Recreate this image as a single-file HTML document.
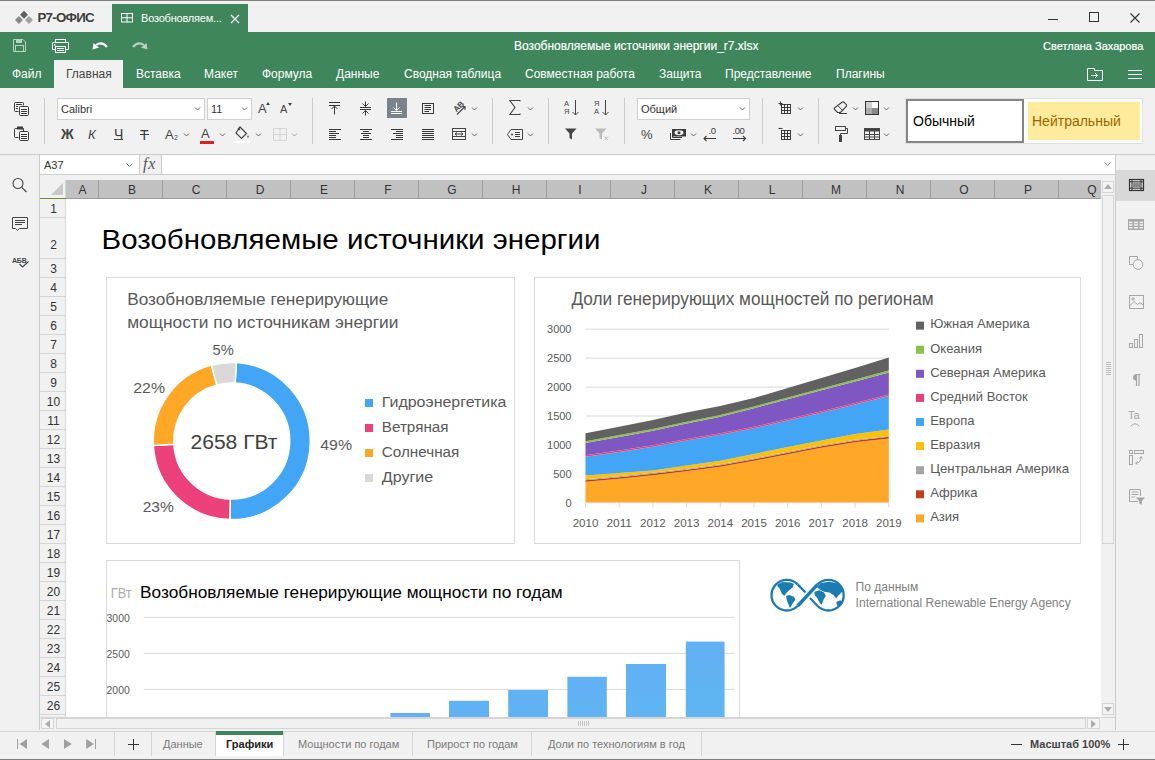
<!DOCTYPE html>
<html><head><meta charset="utf-8">
<style>
*{margin:0;padding:0;box-sizing:border-box}
html,body{width:1155px;height:760px;overflow:hidden;background:#f1f1f1;font-family:"Liberation Sans",sans-serif;position:relative}
.a{position:absolute}
.t{position:absolute;white-space:nowrap;line-height:1}
svg{position:absolute;overflow:visible}
</style></head><body>
<!-- ===== TITLE BAR ===== -->
<div class="a" style="left:0;top:0;width:1155px;height:1px;background:#808080"></div>
<svg style="left:14px;top:10px" width="20" height="15" viewBox="0 0 20 15"><path d="M10 0.75L13.95 4.7L10 8.65L6.05 4.7Z" fill="#5f5f5f"/><path d="M4.9 6.05L8.850000000000001 10L4.9 13.95L0.9500000000000002 10Z" fill="#8a8a8a"/><path d="M15 6.05L18.95 10L15 13.95L11.05 10Z" fill="#a3a3a3"/></svg>
<div class="t" style="left:37.5px;top:11px;font-size:13.3px;font-weight:bold;color:#3d3d3d;letter-spacing:-0.75px">Р7-ОФИС</div>
<div class="a" style="left:112px;top:4px;width:136px;height:28px;background:#40865c"></div>
<svg style="left:121px;top:13px" width="13" height="10" viewBox="0 0 13 10"><rect x="0.5" y="0.5" width="11" height="8.5" fill="none" stroke="#fff" stroke-width="1"/><path d="M6 0.5V9M0.5 4.75H11.5" stroke="#fff" stroke-width="1"/></svg>
<div class="t" style="left:141px;top:13px;font-size:11px;color:#fff;letter-spacing:-0.2px">Возобновляем...</div>
<svg style="left:230px;top:14px" width="10" height="10" viewBox="0 0 10 10"><path d="M1 1L9 9M9 1L1 9" stroke="#fff" stroke-width="1.2"/></svg>
<!-- window controls -->
<div class="a" style="left:1048px;top:19px;width:10px;height:1px;background:#333"></div>
<div class="a" style="left:1089px;top:12px;width:10px;height:10px;border:1px solid #333"></div>
<svg style="left:1130px;top:13px" width="10" height="10" viewBox="0 0 10 10"><path d="M0.5 0.5L9.5 9.5M9.5 0.5L0.5 9.5" stroke="#333" stroke-width="1.1"/></svg>

<!-- ===== GREEN HEADER ===== -->
<div class="a" style="left:0;top:32px;width:1155px;height:56px;background:#40865c"></div>
<!-- save (disabled) -->
<svg style="left:13px;top:39px" width="13" height="13" viewBox="0 0 13 13"><path d="M0.5 0.5H10L12.5 3V12.5H0.5Z" fill="none" stroke="#b9d2c2" stroke-width="1"/><rect x="3" y="0.5" width="6" height="3.5" fill="#b9d2c2"/><rect x="2.5" y="6.5" width="8" height="6" fill="none" stroke="#b9d2c2"/></svg>
<!-- print -->
<svg style="left:52px;top:39px" width="17" height="14" viewBox="0 0 17 14"><rect x="3.5" y="0.5" width="10" height="3" fill="none" stroke="#fff"/><path d="M3.5 10.5H0.5V3.5H16.5V10.5H13.5" fill="none" stroke="#fff"/><rect x="3.5" y="7.5" width="10" height="6" fill="none" stroke="#fff"/><path d="M5 9.5H12M5 11.5H12" stroke="#fff"/><rect x="2" y="5" width="1.5" height="1.5" fill="#fff"/></svg>
<!-- undo -->
<svg style="left:92px;top:42px" width="16" height="9" viewBox="0 0 16 9"><path d="M4 3 Q10 -1 15 5" fill="none" stroke="#fff" stroke-width="2"/><path d="M0.5 7.5 L1.5 1 L7 5.5Z" fill="#fff"/></svg>
<!-- redo disabled -->
<svg style="left:132px;top:42px" width="16" height="9" viewBox="0 0 16 9"><path d="M12 3 Q6 -1 1 5" fill="none" stroke="#b9d2c2" stroke-width="2"/><path d="M15.5 7.5 L14.5 1 L9 5.5Z" fill="#b9d2c2"/></svg>
<div class="t" style="left:514px;top:40px;font-size:12px;color:#fff;-webkit-text-stroke:0.15px #fff">Возобновляемые источники энергии_r7.xlsx</div>
<div class="t" style="left:1043px;top:40.7px;font-size:11px;color:#fff;-webkit-text-stroke:0.2px #fff">Светлана Захарова</div>

<!-- menu -->
<div class="a" style="left:54px;top:60px;width:69px;height:28px;background:#f1f1f1"></div>
<div class="t" style="left:12px;top:68px;font-size:12px;color:#fff">Файл</div>
<div class="t" style="left:66px;top:68px;font-size:12px;color:#444">Главная</div>
<div class="t" style="left:136px;top:68px;font-size:12px;color:#fff">Вставка</div>
<div class="t" style="left:204px;top:68px;font-size:12px;color:#fff">Макет</div>
<div class="t" style="left:262px;top:68px;font-size:12px;color:#fff">Формула</div>
<div class="t" style="left:336px;top:68px;font-size:12px;color:#fff">Данные</div>
<div class="t" style="left:404px;top:68px;font-size:12px;color:#fff">Сводная таблица</div>
<div class="t" style="left:525px;top:68px;font-size:12px;color:#fff">Совместная работа</div>
<div class="t" style="left:659px;top:68px;font-size:12px;color:#fff">Защита</div>
<div class="t" style="left:725px;top:68px;font-size:12px;color:#fff">Представление</div>
<div class="t" style="left:836px;top:68px;font-size:12px;color:#fff">Плагины</div>
<!-- open file location icon -->
<svg style="left:1087px;top:68px" width="16" height="13" viewBox="0 0 16 13"><path d="M0.5 0.5H7.5V2.5H15.5V12.5H0.5Z" fill="none" stroke="#fff"/><path d="M4 7.5H10.5M8 5L10.5 7.5L8 10" fill="none" stroke="#fff"/></svg>
<!-- hamburger -->
<div class="a" style="left:1128px;top:70px;width:14px;height:1px;background:#fff"></div>
<div class="a" style="left:1128px;top:74px;width:14px;height:1px;background:#fff"></div>
<div class="a" style="left:1128px;top:78px;width:14px;height:1px;background:#fff"></div>
<!-- ===== TOOLBAR ===== -->
<div class="a" style="left:0;top:154px;width:1155px;height:1px;background:#cbcbcb"></div>
<!-- copy/paste -->
<svg style="left:14px;top:102px" width="16" height="14" viewBox="0 0 16 14"><path d="M4.5 9.5H1.5Q0.5 9.5 0.5 8.5V1.5Q0.5 0.5 1.5 0.5H8.5Q9.5 0.5 9.5 1.5V3.5" fill="none" stroke="#3a3a3a"/><path d="M2 2.5H8M2 4.5H4M2 6.5H4" stroke="#3a3a3a"/><rect x="5.5" y="4.5" width="9" height="9" rx="1" fill="none" stroke="#3a3a3a"/><path d="M7 7.5H13M7 9.5H13M7 11.5H13" stroke="#3a3a3a"/></svg>
<svg style="left:14px;top:126px" width="16" height="15" viewBox="0 0 16 15"><path d="M4.5 11.5H1.5Q0.5 11.5 0.5 10.5V3.5Q0.5 2.5 1.5 2.5H9.5V5" fill="none" stroke="#3a3a3a"/><rect x="3" y="0.5" width="6" height="3" fill="#3a3a3a"/><rect x="5.5" y="5.5" width="9" height="9" rx="1" fill="none" stroke="#3a3a3a"/><path d="M7 8.5H13M7 10.5H13M7 12.5H13" stroke="#3a3a3a"/></svg>
<div class="a" style="left:44px;top:98px;width:1px;height:46px;background:#cbcbcb"></div>
<!-- font combo -->
<div class="a" style="left:57px;top:98px;width:148px;height:22px;background:#fff;border:1px solid #cfcfcf"></div>
<div class="t" style="left:61px;top:104px;font-size:11px;color:#333">Calibri</div>
<svg style="left:194px;top:107px" width="7" height="5" viewBox="0 0 7 5"><path d="M1 0.5L3.5 3L6 0.5" fill="none" stroke="#555" stroke-width="0.9"/></svg>
<div class="a" style="left:207px;top:98px;width:45px;height:22px;background:#fff;border:1px solid #cfcfcf"></div>
<div class="t" style="left:211px;top:104px;font-size:11px;color:#333">11</div>
<svg style="left:241px;top:107px" width="7" height="5" viewBox="0 0 7 5"><path d="M1 0.5L3.5 3L6 0.5" fill="none" stroke="#555" stroke-width="0.9"/></svg>
<div class="t" style="left:258px;top:102px;font-size:13px;color:#444">A</div>
<svg style="left:266px;top:102px" width="4" height="3" viewBox="0 0 4 3"><path d="M0 3L2 0L4 3Z" fill="#444"/></svg>
<div class="t" style="left:280px;top:104px;font-size:11px;color:#444">A</div>
<svg style="left:288px;top:103px" width="4" height="3" viewBox="0 0 4 3"><path d="M0 0L2 3L4 0Z" fill="#444"/></svg>
<!-- row 2: B I U S -->
<div class="t" style="left:61px;top:127px;font-size:14px;font-weight:bold;color:#444">Ж</div>
<div class="t" style="left:88px;top:128px;font-size:13px;font-style:italic;color:#444">К</div>
<div class="t" style="left:114px;top:126.5px;font-size:14px;color:#3a3a3a">Ч</div>
<div class="a" style="left:114px;top:139px;width:9px;height:1px;background:#444"></div>
<div class="t" style="left:140px;top:127.5px;font-size:14px;color:#3a3a3a">Т</div>
<div class="a" style="left:140px;top:134px;width:9px;height:1px;background:#3a3a3a"></div>
<div class="t" style="left:165px;top:128px;font-size:13px;color:#444">A</div>
<div class="t" style="left:174px;top:134px;font-size:7px;color:#444">2</div>
<svg style="left:183px;top:133px" width="7" height="5" viewBox="0 0 7 5"><path d="M1 0.5L3.5 3L6 0.5" fill="none" stroke="#555" stroke-width="0.9"/></svg>
<div class="t" style="left:201px;top:127px;font-size:13px;color:#444">A</div>
<div class="a" style="left:200px;top:141px;width:14px;height:3px;background:#e02020"></div>
<svg style="left:219px;top:133px" width="7" height="5" viewBox="0 0 7 5"><path d="M1 0.5L3.5 3L6 0.5" fill="none" stroke="#555" stroke-width="0.9"/></svg>
<svg style="left:235px;top:126px" width="16" height="17" viewBox="0 0 16 17"><path d="M5 1L11.5 7.5L6.5 12.5L1 7Z" fill="none" stroke="#444" stroke-width="1.2"/><path d="M3 2L5 4" stroke="#444" stroke-width="1.2"/><path d="M13 9Q11.5 11 13 12Q14.5 11 13 9Z" fill="#444"/><rect x="0" y="15" width="15" height="2" fill="#fff"/></svg>
<svg style="left:255px;top:133px" width="7" height="5" viewBox="0 0 7 5"><path d="M1 0.5L3.5 3L6 0.5" fill="none" stroke="#555" stroke-width="0.9"/></svg>
<svg style="left:273px;top:128px" width="14" height="13" viewBox="0 0 14 13"><rect x="0.5" y="0.5" width="13" height="12" fill="none" stroke="#bbb" stroke-dasharray="1 1"/><path d="M7 0.5V12.5M0.5 6.5H13.5" stroke="#bbb" stroke-dasharray="1 1"/></svg>
<svg style="left:291px;top:133px" width="7" height="5" viewBox="0 0 7 5"><path d="M1 0.5L3.5 3L6 0.5" fill="none" stroke="#999" stroke-width="0.9"/></svg>
<div class="a" style="left:312px;top:98px;width:1px;height:46px;background:#cbcbcb"></div>

<!-- alignment -->
<svg style="left:0;top:0" width="1" height="1" viewBox="0 0 1 1">
<path d="M329 102.5H340M329 105.5H340M334.5 106V114.5M331.5 109L334.5 106L337.5 109" fill="none" stroke="#383838"/>
<path d="M360 107.5H371M360 109.5H371M365.5 101.5V106.5M362.5 103.5L365.5 106.5L368.5 103.5M365.5 110.5V115.5M362.5 113.5L365.5 110.5L368.5 113.5" fill="none" stroke="#383838"/>
<rect x="387" y="98" width="20" height="20" fill="#7a828b"/>
<path d="M391 111.5H402M391 113.5H402M396.5 102.5V110.5M393.5 107.5L396.5 110.5L399.5 107.5" fill="none" stroke="#fff"/>
<rect x="422.5" y="103.5" width="11" height="10" fill="none" stroke="#383838"/>
<path d="M424.5 105.5H431M424.5 107.5H431M424.5 109.5H431M424.5 111.5H429" fill="none" stroke="#383838"/>
<path d="M329 129.5H341M329 131.5H336M329 133.5H339M329 135.5H336M329 137.5H336M329 139.5H341M360 129.5H372M363 131.5H369M361 133.5H371M363 135.5H369M363 137.5H369M360 139.5H372M391 129.5H403M396 131.5H403M393 133.5H403M396 135.5H403M396 137.5H403M391 139.5H403M422 129.5H434M422 131.5H434M422 133.5H434M422 135.5H434M422 137.5H434M422 139.5H434" fill="none" stroke="#383838"/>
</svg>
<svg style="left:452px;top:100px" width="16" height="16" viewBox="0 0 16 16"><text x="0" y="0" font-size="8" font-weight="bold" fill="#444" transform="translate(4.5 12.5) rotate(-45)" font-family="Liberation Sans">AB</text><path d="M5 14.5L12.5 7M9.5 6.5H13V10" fill="none" stroke="#444" stroke-width="1.1"/></svg>
<svg style="left:471px;top:107px" width="7" height="5" viewBox="0 0 7 5"><path d="M1 0.5L3.5 3L6 0.5" fill="none" stroke="#555" stroke-width="0.9"/></svg>
<svg style="left:452px;top:128px" width="14" height="12" viewBox="0 0 14 12"><rect x="0.5" y="0.5" width="13" height="11" fill="none" stroke="#444"/><path d="M0.5 3.5H13.5M0.5 8.5H13.5M3 6H11M5 4.5L3 6L5 7.5M9 4.5L11 6L9 7.5" fill="none" stroke="#444"/></svg>
<svg style="left:471px;top:133px" width="7" height="5" viewBox="0 0 7 5"><path d="M1 0.5L3.5 3L6 0.5" fill="none" stroke="#555" stroke-width="0.9"/></svg>
<div class="a" style="left:492px;top:98px;width:1px;height:46px;background:#cbcbcb"></div>

<!-- sum / named -->
<svg style="left:509px;top:100px" width="12" height="15" viewBox="0 0 12 15"><path d="M11 1.5V0.5H0.8L6 7.5L0.8 14.5H11V13.5" fill="none" stroke="#444" stroke-width="1.1"/></svg>
<svg style="left:527px;top:107px" width="7" height="5" viewBox="0 0 7 5"><path d="M1 0.5L3.5 3L6 0.5" fill="none" stroke="#555" stroke-width="0.9"/></svg>
<svg style="left:507px;top:129px" width="16" height="11" viewBox="0 0 16 11"><path d="M4 0.5H15.5V10.5H4L0.5 5.5Z" fill="none" stroke="#444"/><circle cx="5" cy="5.5" r="1" fill="#444"/><path d="M8 3.5H13M8 5.5H13M8 7.5H13" stroke="#444"/></svg>
<svg style="left:527px;top:133px" width="7" height="5" viewBox="0 0 7 5"><path d="M1 0.5L3.5 3L6 0.5" fill="none" stroke="#555" stroke-width="0.9"/></svg>
<div class="a" style="left:548px;top:98px;width:1px;height:46px;background:#cbcbcb"></div>

<!-- sort/filter -->
<div class="t" style="left:564px;top:100px;font-size:7.5px;color:#444;line-height:8px">А<br>Я</div>
<svg style="left:572px;top:100px" width="7" height="16" viewBox="0 0 7 16"><path d="M3.5 0V15M0.5 12L3.5 15L6.5 12" fill="none" stroke="#444"/></svg>
<div class="t" style="left:594px;top:100px;font-size:7.5px;color:#444;line-height:8px">Я<br>А</div>
<svg style="left:602px;top:100px" width="7" height="16" viewBox="0 0 7 16"><path d="M3.5 0V15M0.5 12L3.5 15L6.5 12" fill="none" stroke="#444"/></svg>
<svg style="left:565px;top:128px" width="12" height="12" viewBox="0 0 12 12"><path d="M0 0.5H11.5L7 5.5V11.5L4.5 10V5.5Z" fill="#444"/></svg>
<svg style="left:595px;top:128px" width="14" height="13" viewBox="0 0 14 13"><path d="M0 0.5H11.5L7 5.5V11.5L4.5 10V5.5Z" fill="#bbb"/><path d="M9.5 8.5L13 12M13 8.5L9.5 12" stroke="#bbb"/></svg>
<div class="a" style="left:624px;top:98px;width:1px;height:46px;background:#cbcbcb"></div>

<!-- number format -->
<div class="a" style="left:637px;top:98px;width:113px;height:22px;background:#fff;border:1px solid #cfcfcf"></div>
<div class="t" style="left:641px;top:104px;font-size:11px;color:#333">Общий</div>
<svg style="left:739px;top:107px" width="7" height="5" viewBox="0 0 7 5"><path d="M1 0.5L3.5 3L6 0.5" fill="none" stroke="#555" stroke-width="0.9"/></svg>
<div class="t" style="left:641px;top:128px;font-size:13px;color:#444">%</div>
<svg style="left:670px;top:129px" width="16" height="12" viewBox="0 0 16 12"><path d="M0.5 4V10.5H10.5M2.5 3V8.5H12" fill="none" stroke="#3a3a3a"/><rect x="2" y="0" width="14" height="7.5" fill="#3a3a3a"/><ellipse cx="9" cy="3.75" rx="4.5" ry="2.4" fill="#f1f1f1"/><circle cx="9" cy="3.75" r="1.5" fill="#3a3a3a"/></svg>
<svg style="left:690px;top:133px" width="7" height="5" viewBox="0 0 7 5"><path d="M1 0.5L3.5 3L6 0.5" fill="none" stroke="#555" stroke-width="0.9"/></svg>
<div class="t" style="left:708.5px;top:126.2px;font-size:9.5px;color:#3a3a3a;letter-spacing:-0.3px">.0</div>
<svg style="left:703px;top:135.5px" width="14" height="6" viewBox="0 0 14 6"><path d="M13 2.5H1M3.5 0L1 2.5L3.5 5" fill="none" stroke="#3a3a3a" stroke-width="1.1"/></svg>
<div class="t" style="left:732.5px;top:126.2px;font-size:9.5px;color:#3a3a3a;letter-spacing:-0.4px">.00</div>
<svg style="left:733px;top:135.5px" width="14" height="6" viewBox="0 0 14 6"><path d="M0 2.5H12.5M10 0L12.5 2.5L10 5" fill="none" stroke="#3a3a3a" stroke-width="1.1"/></svg>
<div class="a" style="left:762px;top:98px;width:1px;height:46px;background:#cbcbcb"></div>

<!-- insert/delete cells -->
<svg style="left:778px;top:101px" width="14" height="14" viewBox="0 0 14 14"><path d="M2.5 0.5V4.5M0.5 2.5H4.5" stroke="#3a3a3a" stroke-width="1.1"/><rect x="3.5" y="3.5" width="9" height="9" fill="none" stroke="#3a3a3a"/><path d="M6.5 3.5V12.5M9.5 3.5V12.5M3.5 6.5H12.5M3.5 9.5H12.5" stroke="#3a3a3a"/></svg>
<svg style="left:797px;top:107px" width="7" height="5" viewBox="0 0 7 5"><path d="M1 0.5L3.5 3L6 0.5" fill="none" stroke="#555" stroke-width="0.9"/></svg>
<svg style="left:778px;top:127px" width="14" height="14" viewBox="0 0 14 14"><path d="M0.5 1.5H4.5" stroke="#3a3a3a" stroke-width="1.1"/><rect x="3.5" y="3.5" width="9" height="9" fill="none" stroke="#3a3a3a"/><path d="M6.5 3.5V12.5M9.5 3.5V12.5M3.5 6.5H12.5M3.5 9.5H12.5" stroke="#3a3a3a"/></svg>
<svg style="left:797px;top:133px" width="7" height="5" viewBox="0 0 7 5"><path d="M1 0.5L3.5 3L6 0.5" fill="none" stroke="#555" stroke-width="0.9"/></svg>
<div class="a" style="left:818px;top:98px;width:1px;height:46px;background:#cbcbcb"></div>

<!-- clear / cond format / paint / table -->
<svg style="left:833px;top:101px" width="15" height="14" viewBox="0 0 15 14"><path d="M9 1.2Q10 0.5 11 1.2L13.3 3.5Q14 4.5 13.3 5.5L7.5 11.5H4.5L1.5 8.5Q0.8 7.5 1.5 6.8Z" fill="none" stroke="#3a3a3a" stroke-width="1.1"/><path d="M5 4.8L10 9.8M6 12.5H14" stroke="#3a3a3a"/></svg>
<svg style="left:852px;top:107px" width="7" height="5" viewBox="0 0 7 5"><path d="M1 0.5L3.5 3L6 0.5" fill="none" stroke="#555" stroke-width="0.9"/></svg>
<svg style="left:865px;top:101px" width="14" height="14" viewBox="0 0 14 14"><rect x="1" y="1" width="6" height="6" fill="#cfcfcf"/><rect x="7" y="1" width="6" height="6" fill="#fafafa"/><rect x="1" y="7" width="6" height="6" fill="#ababab"/><rect x="7" y="7" width="6" height="6" fill="#8a8a8a"/><rect x="0.5" y="0.5" width="13" height="13" fill="none" stroke="#333"/></svg>
<svg style="left:883px;top:107px" width="7" height="5" viewBox="0 0 7 5"><path d="M1 0.5L3.5 3L6 0.5" fill="none" stroke="#555" stroke-width="0.9"/></svg>
<svg style="left:835px;top:126px" width="13" height="16" viewBox="0 0 13 16"><rect x="0.5" y="0.5" width="10" height="4" fill="none" stroke="#444"/><path d="M10.5 2.5H12.5V7.5H5.5V9" fill="none" stroke="#444"/><rect x="4" y="9" width="3" height="7" fill="#444"/></svg>
<svg style="left:864px;top:128px" width="16" height="12" viewBox="0 0 16 12"><rect x="0.5" y="0.5" width="15" height="11" fill="none" stroke="#444"/><rect x="0.5" y="0.5" width="15" height="3" fill="#444"/><path d="M0.5 6.5H15.5M0.5 9H15.5M5.5 0.5V11.5M10.5 0.5V11.5" stroke="#444"/></svg>
<svg style="left:883px;top:133px" width="7" height="5" viewBox="0 0 7 5"><path d="M1 0.5L3.5 3L6 0.5" fill="none" stroke="#555" stroke-width="0.9"/></svg>

<!-- styles -->
<div class="a" style="left:905px;top:98px;width:238px;height:46px;background:#fff;border:1px solid #e0e0e0"></div>
<div class="a" style="left:906px;top:99px;width:118px;height:44px;background:#fff;border:2px solid #868686"></div>
<div class="t" style="left:913px;top:114px;font-size:14px;color:#000">Обычный</div>
<div class="a" style="left:1028px;top:102px;width:112px;height:38px;background:#ffeb9c"></div>
<div class="t" style="left:1032px;top:114px;font-size:14px;color:#9c6500">Нейтральный</div>
<!-- ===== LEFT PANEL ===== -->
<div class="a" style="left:39px;top:155px;width:1px;height:575px;background:#cbcbcb"></div>
<svg style="left:12px;top:177px" width="16" height="16" viewBox="0 0 16 16"><circle cx="6" cy="6.5" r="5" fill="none" stroke="#444" stroke-width="1.1"/><path d="M9.8 10.3L14.5 15" stroke="#444" stroke-width="1.2"/></svg>
<svg style="left:12px;top:217px" width="16" height="14" viewBox="0 0 16 14"><path d="M0.5 0.5H15.5V11.5H7.5L5.5 13.5L3.5 11.5H0.5Z" fill="none" stroke="#444"/><path d="M3 3.5H13M3 5.5H13M3 7.5H10" stroke="#444"/></svg>
<div class="t" style="left:12px;top:257px;font-size:7px;font-weight:bold;color:#444;letter-spacing:-0.2px">АБВ</div>
<svg style="left:19px;top:261px" width="10" height="7" viewBox="0 0 10 7"><path d="M0.5 3L3.5 6L9.5 0.5" fill="none" stroke="#444" stroke-width="1.1"/></svg>

<!-- ===== FORMULA BAR ===== -->
<div class="a" style="left:40px;top:155px;width:1075px;height:19px;background:#fff"></div>
<div class="a" style="left:40px;top:174px;width:1075px;height:1px;background:#cbcbcb"></div>
<div class="t" style="left:44px;top:159.5px;font-size:11px;color:#333">A37</div>
<svg style="left:126px;top:163px" width="7" height="5" viewBox="0 0 7 5"><path d="M0.5 0.5L3.5 3.5L6.5 0.5" fill="none" stroke="#666" stroke-width="0.9"/></svg>
<div class="a" style="left:139px;top:155px;width:1px;height:19px;background:#cbcbcb"></div>
<div class="a" style="left:140px;top:155px;width:21px;height:19px;background:#f1f1f1"></div>
<div class="a" style="left:161px;top:155px;width:1px;height:19px;background:#cbcbcb"></div>
<div class="t" style="left:143px;top:156px;font-size:16px;font-style:italic;color:#555;letter-spacing:0.8px;font-family:'Liberation Serif',serif">fx</div>
<svg style="left:1104px;top:162px" width="7" height="5" viewBox="0 0 7 5"><path d="M0.5 0.5L3.5 3.5L6.5 0.5" fill="none" stroke="#666" stroke-width="0.9"/></svg>
<div class="a" style="left:40px;top:175px;width:1075px;height:5px;background:#f1f1f1"></div>

<!-- ===== GRID ===== -->
<div class="a" style="left:65px;top:198px;width:1036px;height:519px;background:#fff"></div>
<!-- corner -->
<div class="a" style="left:40px;top:180px;width:26px;height:18px;background:#f1f1f1;border-right:1px solid #d5d5d5"></div>
<svg style="left:51px;top:183px" width="12" height="12" viewBox="0 0 12 12"><path d="M12 0V12H0Z" fill="#c8c8c8"/></svg>
<div class="a" style="left:40px;top:197.5px;width:26px;height:1.2px;background:#708a3c"></div>
<!-- column header -->
<div id="colhdr" class="a" style="left:66px;top:180px;width:1035px;height:19px;background:#c1c1c1;border-bottom:1px solid #9c9c9c"></div>
<div class="t" style="left:66px;top:183.6px;width:33px;text-align:center;font-size:12px;color:#333">A</div>
<div class="a" style="left:98px;top:180px;width:1px;height:18px;background:#9c9c9c"></div>
<div class="t" style="left:100px;top:183.6px;width:64px;text-align:center;font-size:12px;color:#333">B</div>
<div class="a" style="left:162px;top:180px;width:1px;height:18px;background:#9c9c9c"></div>
<div class="t" style="left:164px;top:183.6px;width:64px;text-align:center;font-size:12px;color:#333">C</div>
<div class="a" style="left:226px;top:180px;width:1px;height:18px;background:#9c9c9c"></div>
<div class="t" style="left:228px;top:183.6px;width:64px;text-align:center;font-size:12px;color:#333">D</div>
<div class="a" style="left:290px;top:180px;width:1px;height:18px;background:#9c9c9c"></div>
<div class="t" style="left:292px;top:183.6px;width:64px;text-align:center;font-size:12px;color:#333">E</div>
<div class="a" style="left:354px;top:180px;width:1px;height:18px;background:#9c9c9c"></div>
<div class="t" style="left:356px;top:183.6px;width:64px;text-align:center;font-size:12px;color:#333">F</div>
<div class="a" style="left:418px;top:180px;width:1px;height:18px;background:#9c9c9c"></div>
<div class="t" style="left:420px;top:183.6px;width:64px;text-align:center;font-size:12px;color:#333">G</div>
<div class="a" style="left:482px;top:180px;width:1px;height:18px;background:#9c9c9c"></div>
<div class="t" style="left:484px;top:183.6px;width:64px;text-align:center;font-size:12px;color:#333">H</div>
<div class="a" style="left:546px;top:180px;width:1px;height:18px;background:#9c9c9c"></div>
<div class="t" style="left:548px;top:183.6px;width:64px;text-align:center;font-size:12px;color:#333">I</div>
<div class="a" style="left:610px;top:180px;width:1px;height:18px;background:#9c9c9c"></div>
<div class="t" style="left:612px;top:183.6px;width:64px;text-align:center;font-size:12px;color:#333">J</div>
<div class="a" style="left:674px;top:180px;width:1px;height:18px;background:#9c9c9c"></div>
<div class="t" style="left:676px;top:183.6px;width:64px;text-align:center;font-size:12px;color:#333">K</div>
<div class="a" style="left:738px;top:180px;width:1px;height:18px;background:#9c9c9c"></div>
<div class="t" style="left:740px;top:183.6px;width:64px;text-align:center;font-size:12px;color:#333">L</div>
<div class="a" style="left:802px;top:180px;width:1px;height:18px;background:#9c9c9c"></div>
<div class="t" style="left:804px;top:183.6px;width:64px;text-align:center;font-size:12px;color:#333">M</div>
<div class="a" style="left:866px;top:180px;width:1px;height:18px;background:#9c9c9c"></div>
<div class="t" style="left:868px;top:183.6px;width:64px;text-align:center;font-size:12px;color:#333">N</div>
<div class="a" style="left:930px;top:180px;width:1px;height:18px;background:#9c9c9c"></div>
<div class="t" style="left:932px;top:183.6px;width:64px;text-align:center;font-size:12px;color:#333">O</div>
<div class="a" style="left:994px;top:180px;width:1px;height:18px;background:#9c9c9c"></div>
<div class="t" style="left:996px;top:183.6px;width:64px;text-align:center;font-size:12px;color:#333">P</div>
<div class="a" style="left:1058px;top:180px;width:1px;height:18px;background:#9c9c9c"></div>
<div class="t" style="left:1060px;top:183.6px;width:64px;text-align:center;font-size:12px;color:#333">Q</div>
<div class="a" style="left:1122px;top:180px;width:1px;height:18px;background:#9c9c9c"></div>
<!-- row header -->
<div class="a" style="left:40px;top:199px;width:26px;height:518px;background:#f1f1f1;border-right:1px solid #d5d5d5"></div>
<div class="t" style="left:41px;top:203.2px;width:25px;text-align:center;font-size:12px;color:#333">1</div>
<div class="a" style="left:40px;top:217px;width:26px;height:1px;background:#d5d5d5"></div>
<div class="t" style="left:41px;top:238.5px;width:25px;text-align:center;font-size:12px;color:#333">2</div>
<div class="a" style="left:40px;top:258px;width:26px;height:1px;background:#d5d5d5"></div>
<div class="t" style="left:41px;top:263.0px;width:25px;text-align:center;font-size:12px;color:#333">3</div>
<div class="a" style="left:40px;top:277px;width:26px;height:1px;background:#d5d5d5"></div>
<div class="t" style="left:41px;top:282.0px;width:25px;text-align:center;font-size:12px;color:#333">4</div>
<div class="a" style="left:40px;top:296px;width:26px;height:1px;background:#d5d5d5"></div>
<div class="t" style="left:41px;top:301.0px;width:25px;text-align:center;font-size:12px;color:#333">5</div>
<div class="a" style="left:40px;top:315px;width:26px;height:1px;background:#d5d5d5"></div>
<div class="t" style="left:41px;top:320.0px;width:25px;text-align:center;font-size:12px;color:#333">6</div>
<div class="a" style="left:40px;top:334px;width:26px;height:1px;background:#d5d5d5"></div>
<div class="t" style="left:41px;top:339.0px;width:25px;text-align:center;font-size:12px;color:#333">7</div>
<div class="a" style="left:40px;top:353px;width:26px;height:1px;background:#d5d5d5"></div>
<div class="t" style="left:41px;top:358.0px;width:25px;text-align:center;font-size:12px;color:#333">8</div>
<div class="a" style="left:40px;top:372px;width:26px;height:1px;background:#d5d5d5"></div>
<div class="t" style="left:41px;top:377.0px;width:25px;text-align:center;font-size:12px;color:#333">9</div>
<div class="a" style="left:40px;top:391px;width:26px;height:1px;background:#d5d5d5"></div>
<div class="t" style="left:41px;top:396.0px;width:25px;text-align:center;font-size:12px;color:#333">10</div>
<div class="a" style="left:40px;top:410px;width:26px;height:1px;background:#d5d5d5"></div>
<div class="t" style="left:41px;top:415.0px;width:25px;text-align:center;font-size:12px;color:#333">11</div>
<div class="a" style="left:40px;top:429px;width:26px;height:1px;background:#d5d5d5"></div>
<div class="t" style="left:41px;top:434.0px;width:25px;text-align:center;font-size:12px;color:#333">12</div>
<div class="a" style="left:40px;top:448px;width:26px;height:1px;background:#d5d5d5"></div>
<div class="t" style="left:41px;top:453.0px;width:25px;text-align:center;font-size:12px;color:#333">13</div>
<div class="a" style="left:40px;top:467px;width:26px;height:1px;background:#d5d5d5"></div>
<div class="t" style="left:41px;top:472.0px;width:25px;text-align:center;font-size:12px;color:#333">14</div>
<div class="a" style="left:40px;top:486px;width:26px;height:1px;background:#d5d5d5"></div>
<div class="t" style="left:41px;top:491.0px;width:25px;text-align:center;font-size:12px;color:#333">15</div>
<div class="a" style="left:40px;top:505px;width:26px;height:1px;background:#d5d5d5"></div>
<div class="t" style="left:41px;top:510.0px;width:25px;text-align:center;font-size:12px;color:#333">16</div>
<div class="a" style="left:40px;top:524px;width:26px;height:1px;background:#d5d5d5"></div>
<div class="t" style="left:41px;top:529.0px;width:25px;text-align:center;font-size:12px;color:#333">17</div>
<div class="a" style="left:40px;top:543px;width:26px;height:1px;background:#d5d5d5"></div>
<div class="t" style="left:41px;top:548.0px;width:25px;text-align:center;font-size:12px;color:#333">18</div>
<div class="a" style="left:40px;top:562px;width:26px;height:1px;background:#d5d5d5"></div>
<div class="t" style="left:41px;top:567.0px;width:25px;text-align:center;font-size:12px;color:#333">19</div>
<div class="a" style="left:40px;top:581px;width:26px;height:1px;background:#d5d5d5"></div>
<div class="t" style="left:41px;top:586.0px;width:25px;text-align:center;font-size:12px;color:#333">20</div>
<div class="a" style="left:40px;top:600px;width:26px;height:1px;background:#d5d5d5"></div>
<div class="t" style="left:41px;top:605.0px;width:25px;text-align:center;font-size:12px;color:#333">21</div>
<div class="a" style="left:40px;top:619px;width:26px;height:1px;background:#d5d5d5"></div>
<div class="t" style="left:41px;top:624.0px;width:25px;text-align:center;font-size:12px;color:#333">22</div>
<div class="a" style="left:40px;top:638px;width:26px;height:1px;background:#d5d5d5"></div>
<div class="t" style="left:41px;top:643.0px;width:25px;text-align:center;font-size:12px;color:#333">23</div>
<div class="a" style="left:40px;top:657px;width:26px;height:1px;background:#d5d5d5"></div>
<div class="t" style="left:41px;top:662.0px;width:25px;text-align:center;font-size:12px;color:#333">24</div>
<div class="a" style="left:40px;top:676px;width:26px;height:1px;background:#d5d5d5"></div>
<div class="t" style="left:41px;top:681.0px;width:25px;text-align:center;font-size:12px;color:#333">25</div>
<div class="a" style="left:40px;top:695px;width:26px;height:1px;background:#d5d5d5"></div>
<div class="t" style="left:41px;top:700.0px;width:25px;text-align:center;font-size:12px;color:#333">26</div>
<div class="a" style="left:40px;top:714px;width:26px;height:1px;background:#d5d5d5"></div>

<!-- vertical scrollbar -->
<div class="a" style="left:1101px;top:180px;width:14px;height:537px;background:#f1f1f1"></div>
<div class="a" style="left:1102px;top:181px;width:12px;height:12px;background:#f4f4f4;border:1px solid #d5d5d5"></div>
<svg style="left:1104px;top:184px" width="8" height="5" viewBox="0 0 8 5"><path d="M0 5L4 0L8 5Z" fill="#adadad"/></svg>
<div class="a" style="left:1102px;top:195px;width:12px;height:349px;background:#f1f1f1;border:1px solid #d5d5d5"></div>
<div class="a" style="left:1106px;top:362px;width:5px;height:1px;background:#bdbdbd"></div>
<div class="a" style="left:1106px;top:364px;width:5px;height:1px;background:#bdbdbd"></div>
<div class="a" style="left:1106px;top:366px;width:5px;height:1px;background:#bdbdbd"></div>
<div class="a" style="left:1106px;top:368px;width:5px;height:1px;background:#bdbdbd"></div>
<div class="a" style="left:1106px;top:370px;width:5px;height:1px;background:#bdbdbd"></div>
<div class="a" style="left:1106px;top:372px;width:5px;height:1px;background:#bdbdbd"></div>
<div class="a" style="left:1106px;top:374px;width:5px;height:1px;background:#bdbdbd"></div>
<div class="a" style="left:1102px;top:703px;width:12px;height:12px;background:#f4f4f4;border:1px solid #d5d5d5"></div>
<svg style="left:1104px;top:707px" width="8" height="5" viewBox="0 0 8 5"><path d="M0 0L4 5L8 0Z" fill="#adadad"/></svg>

<!-- horizontal scrollbar -->
<div class="a" style="left:40px;top:717px;width:1075px;height:14px;background:#f1f1f1;border-top:1px solid #d5d5d5"></div>
<div class="a" style="left:41px;top:718px;width:13px;height:11px;background:#f4f4f4;border:1px solid #d5d5d5"></div>
<svg style="left:45px;top:720px" width="5" height="8" viewBox="0 0 5 8"><path d="M5 0L0 4L5 8Z" fill="#adadad"/></svg>
<div class="a" style="left:56px;top:718px;width:1030px;height:11px;background:#f1f1f1;border:1px solid #d5d5d5"></div>
<div class="a" style="left:578px;top:721px;width:1px;height:5px;background:#c5c5c5"></div>
<div class="a" style="left:580px;top:721px;width:1px;height:5px;background:#c5c5c5"></div>
<div class="a" style="left:582px;top:721px;width:1px;height:5px;background:#c5c5c5"></div>
<div class="a" style="left:584px;top:721px;width:1px;height:5px;background:#c5c5c5"></div>
<div class="a" style="left:586px;top:721px;width:1px;height:5px;background:#c5c5c5"></div>
<div class="a" style="left:588px;top:721px;width:1px;height:5px;background:#c5c5c5"></div>
<div class="a" style="left:1087px;top:718px;width:13px;height:11px;background:#f4f4f4;border:1px solid #d5d5d5"></div>
<svg style="left:1091px;top:720px" width="5" height="8" viewBox="0 0 5 8"><path d="M0 0L5 4L0 8Z" fill="#adadad"/></svg>

<!-- ===== RIGHT PANEL ===== -->
<div class="a" style="left:1115px;top:155px;width:1px;height:575px;background:#cbcbcb"></div>
<div class="a" style="left:1116px;top:170px;width:39px;height:31px;background:#d8d8d8"></div>

<svg style="left:1129px;top:179px" width="15" height="12" viewBox="0 0 15 12"><rect x="0.5" y="0.5" width="14" height="11" fill="none" stroke="#333" stroke-width="1.2"/><path d="M0.5 2.8H14.5M0.5 9.2H14.5M3 0.5V11.5M12 0.5V11.5" stroke="#333" stroke-width="1"/><rect x="4" y="3.8" width="7" height="4.4" fill="#888"/></svg>
<svg style="left:1128px;top:219px" width="16" height="11" viewBox="0 0 16 11"><rect x="0" y="0" width="16" height="11" fill="#a8a8a8"/><path d="M1 3.5H4.5M6 3.5H10M11.5 3.5H15M1 6H4.5M6 6H10M11.5 6H15M1 8.8H4.5M6 8.8H10M11.5 8.8H15" stroke="#f1f1f1" stroke-width="1.6"/></svg>
<svg style="left:1129px;top:256px" width="15" height="14" viewBox="0 0 15 14"><path d="M4 8.5H0.5V0.5H8.5V4" fill="none" stroke="#a5a5a5"/><circle cx="9" cy="8.5" r="4.8" fill="none" stroke="#a5a5a5"/></svg>
<svg style="left:1129px;top:295px" width="15" height="14" viewBox="0 0 15 14"><rect x="0.5" y="0.5" width="14" height="13" fill="none" stroke="#a5a5a5"/><circle cx="4" cy="4" r="1.2" fill="none" stroke="#a5a5a5"/><path d="M0.5 11L5 6.5L8.5 9.5L11 7.5L14.5 10.5" fill="none" stroke="#a5a5a5"/></svg>
<svg style="left:1129px;top:334px" width="15" height="14" viewBox="0 0 15 14"><rect x="0.5" y="9.5" width="3" height="4" fill="none" stroke="#a5a5a5"/><rect x="5.5" y="5.5" width="3" height="8" fill="none" stroke="#a5a5a5"/><rect x="10.5" y="0.5" width="3" height="13" fill="none" stroke="#a5a5a5"/></svg>
<svg style="left:1131px;top:374px" width="10" height="12" viewBox="0 0 10 12"><path d="M4 0.5H9.5M5.5 0.5V12M8 0.5V12" stroke="#a5a5a5" stroke-width="1.2"/><path d="M5 0.5A3 3 0 0 0 5 6.5Z" fill="#a5a5a5"/></svg>
<div class="t" style="left:1128px;top:410px;font-size:11px;color:#a5a5a5">Ta</div>
<svg style="left:1130px;top:422px" width="10" height="5" viewBox="0 0 10 5"><path d="M0.5 4.5Q5 -1 9.5 4.5" fill="none" stroke="#a5a5a5"/></svg>
<svg style="left:1129px;top:450px" width="15" height="15" viewBox="0 0 15 15"><rect x="0.5" y="0.5" width="3" height="3" fill="none" stroke="#a5a5a5"/><rect x="5.5" y="0.5" width="9" height="3" fill="none" stroke="#a5a5a5"/><rect x="0.5" y="5.5" width="3" height="9" fill="none" stroke="#a5a5a5"/><path d="M7 13Q12 13 12 7M10.5 8.5L12 6.5L13.5 8.5M8.5 11.5L6.5 13L8.5 14.5" fill="none" stroke="#a5a5a5"/></svg>
<svg style="left:1129px;top:489px" width="16" height="16" viewBox="0 0 16 16"><path d="M9 12.5H0.5V0.5H11.5V7" fill="none" stroke="#a5a5a5"/><path d="M2.5 3H9.5M2.5 5.5H9.5M2.5 8H6" stroke="#a5a5a5"/><path d="M7 8.5H16L12.8 12V16L10.2 14.5V12Z" fill="#a5a5a5"/></svg>


<!-- ===== SHEET TABS ===== -->
<div class="a" style="left:0;top:731px;width:1155px;height:1px;background:#d5d5d5"></div>
<svg style="left:16px;top:738px" width="90" height="12" viewBox="0 0 90 12">
 <path d="M1.5 1V11" stroke="#a0a0a0"/><path d="M11 1V11L3.5 6Z" fill="#a0a0a0"/>
 <path d="M33 1V11L25.3 6Z" fill="#a0a0a0"/>
 <path d="M48 1V11L55.8 6Z" fill="#a0a0a0"/>
 <path d="M70.1 1V11L77.9 6Z" fill="#a0a0a0"/><path d="M79.5 1V11" stroke="#a0a0a0"/>
</svg>
<div class="a" style="left:114px;top:731px;width:1px;height:25px;background:#d5d5d5"></div>
<svg style="left:128px;top:739px" width="11" height="11" viewBox="0 0 11 11"><path d="M5.5 0V11M0 5.5H11" stroke="#333" stroke-width="1"/></svg>
<div class="a" style="left:151px;top:731px;width:1px;height:25px;background:#d5d5d5"></div>
<div class="t" style="left:163px;top:739px;font-size:11px;color:#7a7a7a">Данные</div>
<div class="a" style="left:215px;top:731px;width:1px;height:25px;background:#d5d5d5"></div>
<div class="a" style="left:216px;top:731px;width:67px;height:25px;background:#fff"></div>
<div class="a" style="left:216px;top:731px;width:67px;height:3.6px;background:#40865c"></div>
<div class="t" style="left:226px;top:739px;font-size:11px;font-weight:bold;color:#222">Графики</div>
<div class="a" style="left:283px;top:731px;width:1px;height:25px;background:#d5d5d5"></div>
<div class="t" style="left:298px;top:739px;font-size:11px;color:#7a7a7a">Мощности по годам</div>
<div class="a" style="left:412px;top:731px;width:1px;height:25px;background:#d5d5d5"></div>
<div class="t" style="left:427px;top:739px;font-size:11px;color:#7a7a7a">Прирост по годам</div>
<div class="a" style="left:531px;top:731px;width:1px;height:25px;background:#d5d5d5"></div>
<div class="t" style="left:548px;top:739px;font-size:11px;color:#7a7a7a">Доли по технологиям в год</div>
<div class="a" style="left:701px;top:731px;width:1px;height:25px;background:#d5d5d5"></div>
<div class="a" style="left:1011px;top:744px;width:11px;height:1px;background:#333"></div>
<div class="t" style="left:1030px;top:739px;font-size:11px;font-weight:bold;color:#444">Масштаб 100%</div>
<svg style="left:1118px;top:739px" width="11" height="11" viewBox="0 0 11 11"><path d="M5.5 0V11M0 5.5H11" stroke="#333"/></svg>
<div class="a" style="left:0;top:759px;width:1155px;height:1px;background:#808080"></div>
<svg style="left:0;top:0" width="1155" height="760" viewBox="0 0 1155 760" font-family="Liberation Sans">
<defs><clipPath id="cl"><rect x="40" y="198" width="1061" height="519"/></clipPath><linearGradient id="bg" x1="0" y1="0" x2="0" y2="1"><stop offset="0" stop-color="#62b0f5"/><stop offset="1" stop-color="#5bb9ef"/></linearGradient></defs>
<g clip-path="url(#cl)">
<text x="101.5" y="248.6" font-size="27" fill="#000" text-anchor="start" font-weight="normal" textLength="499.0" lengthAdjust="spacingAndGlyphs">Возобновляемые источники энергии</text>
<rect x="106.5" y="277.5" width="408" height="266" fill="#fff" stroke="#d9d9d9" stroke-width="1"/>
<text x="127.2" y="305.2" font-size="16" fill="#595959" text-anchor="start" font-weight="normal" textLength="261.1" lengthAdjust="spacingAndGlyphs">Возобновляемые генерирующие</text>
<text x="127.2" y="327.8" font-size="16" fill="#595959" text-anchor="start" font-weight="normal" textLength="271.2" lengthAdjust="spacingAndGlyphs">мощности по источникам энергии</text>
<path d="M236.32 362.53A78.6 78.6 0 0 1 229.74 519.57L230.28 498.98A58 58 0 0 0 235.14 383.10Z" fill="#42a5f5" stroke="#fff" stroke-width="1.5" stroke-linejoin="miter"/>
<path d="M229.74 519.57A78.6 78.6 0 0 1 153.33 445.52L173.90 444.34A58 58 0 0 0 230.28 498.98Z" fill="#ec407a" stroke="#fff" stroke-width="1.5" stroke-linejoin="miter"/>
<path d="M153.33 445.52A78.6 78.6 0 0 1 211.46 365.08L216.79 384.98A58 58 0 0 0 173.90 444.34Z" fill="#ffa726" stroke="#fff" stroke-width="1.5" stroke-linejoin="miter"/>
<path d="M211.46 365.08A78.6 78.6 0 0 1 236.32 362.53L235.14 383.10A58 58 0 0 0 216.79 384.98Z" fill="#d9d9d9" stroke="#fff" stroke-width="1.5" stroke-linejoin="miter"/>
<text x="190.5" y="448.8" font-size="20" fill="#404040" text-anchor="start" font-weight="normal" textLength="87.0" lengthAdjust="spacingAndGlyphs">2658 ГВт</text>
<text x="212.5" y="355.0" font-size="15" fill="#595959" text-anchor="start" font-weight="normal" textLength="21.3" lengthAdjust="spacingAndGlyphs">5%</text>
<text x="133.3" y="393.0" font-size="15" fill="#595959" text-anchor="start" font-weight="normal" textLength="31.7" lengthAdjust="spacingAndGlyphs">22%</text>
<text x="320.3" y="449.6" font-size="15" fill="#595959" text-anchor="start" font-weight="normal" textLength="31.7" lengthAdjust="spacingAndGlyphs">49%</text>
<text x="142.7" y="511.8" font-size="15" fill="#595959" text-anchor="start" font-weight="normal" textLength="31.2" lengthAdjust="spacingAndGlyphs">23%</text>
<rect x="365" y="399" width="8" height="8" fill="#42a5f5"/>
<text x="381.8" y="406.7" font-size="14" fill="#595959" text-anchor="start" font-weight="normal" textLength="124.6" lengthAdjust="spacingAndGlyphs">Гидроэнергетика</text>
<rect x="365" y="424" width="8" height="8" fill="#ec407a"/>
<text x="381.8" y="431.7" font-size="14" fill="#595959" text-anchor="start" font-weight="normal" textLength="66.7" lengthAdjust="spacingAndGlyphs">Ветряная</text>
<rect x="365" y="449" width="8" height="8" fill="#ffa726"/>
<text x="381.8" y="456.7" font-size="14" fill="#595959" text-anchor="start" font-weight="normal" textLength="77.5" lengthAdjust="spacingAndGlyphs">Солнечная</text>
<rect x="365" y="474" width="8" height="8" fill="#d9d9d9"/>
<text x="381.8" y="481.7" font-size="14" fill="#595959" text-anchor="start" font-weight="normal" textLength="51.5" lengthAdjust="spacingAndGlyphs">Другие</text>
<rect x="534.5" y="277.5" width="546" height="266" fill="#fff" stroke="#d9d9d9" stroke-width="1"/>
<text x="571.4" y="304.5" font-size="18" fill="#595959" text-anchor="start" font-weight="normal" textLength="362.3" lengthAdjust="spacingAndGlyphs">Доли генерирующих мощностей по регионам</text>
<text x="571.5" y="506.8" font-size="11" fill="#595959" text-anchor="end" font-weight="normal">0</text>
<line x1="585.5" y1="473.9" x2="889" y2="473.9" stroke="#d9d9d9" stroke-width="1"/>
<text x="571.5" y="477.9" font-size="11" fill="#595959" text-anchor="end" font-weight="normal">500</text>
<line x1="585.5" y1="444.9" x2="889" y2="444.9" stroke="#d9d9d9" stroke-width="1"/>
<text x="571.5" y="448.9" font-size="11" fill="#595959" text-anchor="end" font-weight="normal">1000</text>
<line x1="585.5" y1="416.0" x2="889" y2="416.0" stroke="#d9d9d9" stroke-width="1"/>
<text x="571.5" y="420.0" font-size="11" fill="#595959" text-anchor="end" font-weight="normal">1500</text>
<line x1="585.5" y1="387.1" x2="889" y2="387.1" stroke="#d9d9d9" stroke-width="1"/>
<text x="571.5" y="391.1" font-size="11" fill="#595959" text-anchor="end" font-weight="normal">2000</text>
<line x1="585.5" y1="358.1" x2="889" y2="358.1" stroke="#d9d9d9" stroke-width="1"/>
<text x="571.5" y="362.1" font-size="11" fill="#595959" text-anchor="end" font-weight="normal">2500</text>
<line x1="585.5" y1="329.2" x2="889" y2="329.2" stroke="#d9d9d9" stroke-width="1"/>
<text x="571.5" y="333.2" font-size="11" fill="#595959" text-anchor="end" font-weight="normal">3000</text>
<polygon points="585.50,481.80 619.20,478.80 652.90,475.30 686.60,471.30 720.30,466.80 754.00,460.80 787.70,454.30 821.40,447.80 855.10,442.30 888.80,438.40 888.80,502.80 855.10,502.80 821.40,502.80 787.70,502.80 754.00,502.80 720.30,502.80 686.60,502.80 652.90,502.80 619.20,502.80 585.50,502.80" fill="#ffa726"/>
<polygon points="585.50,480.20 619.20,477.20 652.90,473.70 686.60,469.70 720.30,465.20 754.00,459.20 787.70,452.70 821.40,446.20 855.10,440.70 888.80,436.80 888.80,438.40 855.10,442.30 821.40,447.80 787.70,454.30 754.00,460.80 720.30,466.80 686.60,471.30 652.90,475.30 619.20,478.80 585.50,481.80" fill="#c43d1a"/>
<polygon points="585.50,479.30 619.20,476.30 652.90,472.80 686.60,468.80 720.30,464.30 754.00,458.30 787.70,451.80 821.40,445.30 855.10,439.80 888.80,435.90 888.80,436.80 855.10,440.70 821.40,446.20 787.70,452.70 754.00,459.20 720.30,465.20 686.60,469.70 652.90,473.70 619.20,477.20 585.50,480.20" fill="#a5a5a5"/>
<polygon points="585.50,475.60 619.20,473.10 652.90,470.60 686.60,465.60 720.30,460.80 754.00,454.00 787.70,446.90 821.40,440.60 855.10,434.00 888.80,429.40 888.80,435.90 855.10,439.80 821.40,445.30 787.70,451.80 754.00,458.30 720.30,464.30 686.60,468.80 652.90,472.80 619.20,476.30 585.50,479.30" fill="#ffc107"/>
<polygon points="585.50,456.80 619.20,452.10 652.90,446.80 686.60,440.50 720.30,434.80 754.00,428.30 787.70,420.50 821.40,412.70 855.10,404.40 888.80,395.90 888.80,429.40 855.10,434.00 821.40,440.60 787.70,446.90 754.00,454.00 720.30,460.80 686.60,465.60 652.90,470.60 619.20,473.10 585.50,475.60" fill="#42a5f5"/>
<polygon points="585.50,455.30 619.20,450.60 652.90,445.30 686.60,439.00 720.30,433.30 754.00,426.80 787.70,419.00 821.40,411.20 855.10,402.90 888.80,394.40 888.80,395.90 855.10,404.40 821.40,412.70 787.70,420.50 754.00,428.30 720.30,434.80 686.60,440.50 652.90,446.80 619.20,452.10 585.50,456.80" fill="#ec407a"/>
<polygon points="585.50,443.00 619.20,436.90 652.90,430.70 686.60,423.50 720.30,416.80 754.00,408.20 787.70,399.30 821.40,390.30 855.10,381.40 888.80,372.40 888.80,394.40 855.10,402.90 821.40,411.20 787.70,419.00 754.00,426.80 720.30,433.30 686.60,439.00 652.90,445.30 619.20,450.60 585.50,455.30" fill="#7e57c2"/>
<polygon points="585.50,441.20 619.20,435.10 652.90,428.90 686.60,421.70 720.30,415.00 754.00,406.40 787.70,397.50 821.40,388.50 855.10,379.60 888.80,370.60 888.80,372.40 855.10,381.40 821.40,390.30 787.70,399.30 754.00,408.20 720.30,416.80 686.60,423.50 652.90,430.70 619.20,436.90 585.50,443.00" fill="#8bc34a"/>
<polygon points="585.50,433.30 619.20,426.80 652.90,420.00 686.60,412.50 720.30,406.00 754.00,398.00 787.70,388.10 821.40,378.00 855.10,368.00 888.80,357.40 888.80,370.60 855.10,379.60 821.40,388.50 787.70,397.50 754.00,406.40 720.30,415.00 686.60,421.70 652.90,428.90 619.20,435.10 585.50,441.20" fill="#616161"/>
<line x1="585.5" y1="502.8" x2="889" y2="502.8" stroke="#d9d9d9" stroke-width="1"/>
<line x1="585.5" y1="502.8" x2="585.5" y2="507.3" stroke="#d9d9d9" stroke-width="1"/>
<text x="585.5" y="526.5" font-size="11.5" fill="#595959" text-anchor="middle" font-weight="normal" textLength="25.6" lengthAdjust="spacingAndGlyphs">2010</text>
<line x1="619.2" y1="502.8" x2="619.2" y2="507.3" stroke="#d9d9d9" stroke-width="1"/>
<text x="619.2" y="526.5" font-size="11.5" fill="#595959" text-anchor="middle" font-weight="normal" textLength="25.6" lengthAdjust="spacingAndGlyphs">2011</text>
<line x1="652.9" y1="502.8" x2="652.9" y2="507.3" stroke="#d9d9d9" stroke-width="1"/>
<text x="652.9" y="526.5" font-size="11.5" fill="#595959" text-anchor="middle" font-weight="normal" textLength="25.6" lengthAdjust="spacingAndGlyphs">2012</text>
<line x1="686.6" y1="502.8" x2="686.6" y2="507.3" stroke="#d9d9d9" stroke-width="1"/>
<text x="686.6" y="526.5" font-size="11.5" fill="#595959" text-anchor="middle" font-weight="normal" textLength="25.6" lengthAdjust="spacingAndGlyphs">2013</text>
<line x1="720.3" y1="502.8" x2="720.3" y2="507.3" stroke="#d9d9d9" stroke-width="1"/>
<text x="720.3" y="526.5" font-size="11.5" fill="#595959" text-anchor="middle" font-weight="normal" textLength="25.6" lengthAdjust="spacingAndGlyphs">2014</text>
<line x1="754.0" y1="502.8" x2="754.0" y2="507.3" stroke="#d9d9d9" stroke-width="1"/>
<text x="754.0" y="526.5" font-size="11.5" fill="#595959" text-anchor="middle" font-weight="normal" textLength="25.6" lengthAdjust="spacingAndGlyphs">2015</text>
<line x1="787.7" y1="502.8" x2="787.7" y2="507.3" stroke="#d9d9d9" stroke-width="1"/>
<text x="787.7" y="526.5" font-size="11.5" fill="#595959" text-anchor="middle" font-weight="normal" textLength="25.6" lengthAdjust="spacingAndGlyphs">2016</text>
<line x1="821.4" y1="502.8" x2="821.4" y2="507.3" stroke="#d9d9d9" stroke-width="1"/>
<text x="821.4" y="526.5" font-size="11.5" fill="#595959" text-anchor="middle" font-weight="normal" textLength="25.6" lengthAdjust="spacingAndGlyphs">2017</text>
<line x1="855.1" y1="502.8" x2="855.1" y2="507.3" stroke="#d9d9d9" stroke-width="1"/>
<text x="855.1" y="526.5" font-size="11.5" fill="#595959" text-anchor="middle" font-weight="normal" textLength="25.6" lengthAdjust="spacingAndGlyphs">2018</text>
<line x1="888.8" y1="502.8" x2="888.8" y2="507.3" stroke="#d9d9d9" stroke-width="1"/>
<text x="888.8" y="526.5" font-size="11.5" fill="#595959" text-anchor="middle" font-weight="normal" textLength="25.6" lengthAdjust="spacingAndGlyphs">2019</text>
<rect x="916" y="321.6" width="8" height="8" fill="#616161"/>
<text x="930.2" y="328.4" font-size="13" fill="#595959" text-anchor="start" font-weight="normal">Южная Америка</text>
<rect x="916" y="345.7" width="8" height="8" fill="#8bc34a"/>
<text x="930.2" y="352.5" font-size="13" fill="#595959" text-anchor="start" font-weight="normal">Океания</text>
<rect x="916" y="369.8" width="8" height="8" fill="#7e57c2"/>
<text x="930.2" y="376.6" font-size="13" fill="#595959" text-anchor="start" font-weight="normal">Северная Америка</text>
<rect x="916" y="393.9" width="8" height="8" fill="#ec407a"/>
<text x="930.2" y="400.7" font-size="13" fill="#595959" text-anchor="start" font-weight="normal">Средний Восток</text>
<rect x="916" y="418.0" width="8" height="8" fill="#42a5f5"/>
<text x="930.2" y="424.8" font-size="13" fill="#595959" text-anchor="start" font-weight="normal">Европа</text>
<rect x="916" y="442.1" width="8" height="8" fill="#ffc107"/>
<text x="930.2" y="448.9" font-size="13" fill="#595959" text-anchor="start" font-weight="normal">Евразия</text>
<rect x="916" y="466.2" width="8" height="8" fill="#a5a5a5"/>
<text x="930.2" y="473.0" font-size="13" fill="#595959" text-anchor="start" font-weight="normal" textLength="139.0" lengthAdjust="spacingAndGlyphs">Центральная Америка</text>
<rect x="916" y="490.3" width="8" height="8" fill="#c43d1a"/>
<text x="930.2" y="497.1" font-size="13" fill="#595959" text-anchor="start" font-weight="normal">Африка</text>
<rect x="916" y="514.4" width="8" height="8" fill="#ffa726"/>
<text x="930.2" y="521.2" font-size="13" fill="#595959" text-anchor="start" font-weight="normal">Азия</text>
<rect x="106.5" y="560.5" width="633" height="200" fill="#fff" stroke="#d9d9d9" stroke-width="1"/>
<text x="110.7" y="597.6" font-size="14" fill="#aeaeae" text-anchor="start" font-weight="normal" textLength="21.0" lengthAdjust="spacingAndGlyphs">ГВт</text>
<text x="140.1" y="597.7" font-size="17" fill="#000" text-anchor="start" font-weight="normal" textLength="422.6" lengthAdjust="spacingAndGlyphs">Возобновляемые генерирующие мощности по годам</text>
<line x1="143.9" y1="617.4" x2="734.5" y2="617.4" stroke="#d9d9d9" stroke-width="1"/>
<text x="129.7" y="622.2" font-size="10.5" fill="#595959" text-anchor="end" font-weight="normal" textLength="23.1" lengthAdjust="spacingAndGlyphs">3000</text>
<line x1="143.9" y1="653.4" x2="734.5" y2="653.4" stroke="#d9d9d9" stroke-width="1"/>
<text x="129.7" y="658.2" font-size="10.5" fill="#595959" text-anchor="end" font-weight="normal" textLength="23.1" lengthAdjust="spacingAndGlyphs">2500</text>
<line x1="143.9" y1="689.4" x2="734.5" y2="689.4" stroke="#d9d9d9" stroke-width="1"/>
<text x="129.7" y="694.2" font-size="10.5" fill="#595959" text-anchor="end" font-weight="normal" textLength="23.1" lengthAdjust="spacingAndGlyphs">2000</text>
<rect x="390.4" y="713" width="39.5" height="47" fill="url(#bg)"/>
<rect x="449" y="700.8" width="40.0" height="59.200000000000045" fill="url(#bg)"/>
<rect x="508.2" y="690" width="39.8" height="70" fill="url(#bg)"/>
<rect x="567.4" y="676.8" width="39.4" height="83.20000000000005" fill="url(#bg)"/>
<rect x="626" y="664" width="40.0" height="96" fill="url(#bg)"/>
<rect x="685.8" y="641.6" width="38.8" height="118.39999999999998" fill="url(#bg)"/>
</g>
<g fill="none" stroke="#1b7bb3" stroke-width="2.3">
<path d="M797.62 584.38A15.3 15.3 0 1 0 797.62 606.02"/>
<path d="M817.58 584.38A15.3 15.3 0 1 1 817.58 606.02"/>
<path d="M797.62 584.38L805.5 592.5"/>
<path d="M810 598L817.58 606.02"/>
<path d="M797.62 606.02L817.58 584.38" stroke-width="3.4"/>
</g>
<g fill="#1b7bb3">
<polygon points="777.75,584.29 782.51,582.12 790.30,582.55 793.77,583.85 792.90,587.32 788.57,590.78 785.97,593.38 784.24,595.97 781.65,593.38 779.91,589.05 777.32,586.02"/>
<polygon points="785.97,595.97 789.44,595.11 793.77,596.84 795.50,599.44 792.90,602.90 791.17,606.36 789.87,608.10 788.57,604.63 786.84,600.30"/>
<polygon points="817.14,587.32 820.61,582.99 829.26,581.69 836.19,582.99 841.39,586.45 842.25,591.65 837.92,595.97 836.19,598.57 833.59,595.11 829.26,592.51 824.07,591.65 820.61,589.91"/>
<polygon points="814.55,591.65 819.74,590.35 824.07,592.51 825.80,595.97 823.20,600.30 821.47,604.63 819.74,602.90 817.14,597.71 814.55,595.11"/>
<polygon points="836.19,602.03 840.52,600.30 843.12,602.90 839.65,606.36 837.06,605.50"/>
</g>
<text x="855.6" y="591.0" font-size="12" fill="#7f7f7f" text-anchor="start" font-weight="normal" textLength="62.7" lengthAdjust="spacingAndGlyphs">По данным</text>
<text x="855.6" y="606.9" font-size="12" fill="#7f7f7f" text-anchor="start" font-weight="normal" textLength="215.1" lengthAdjust="spacingAndGlyphs">International Renewable Energy Agency</text>
</svg></body></html>
